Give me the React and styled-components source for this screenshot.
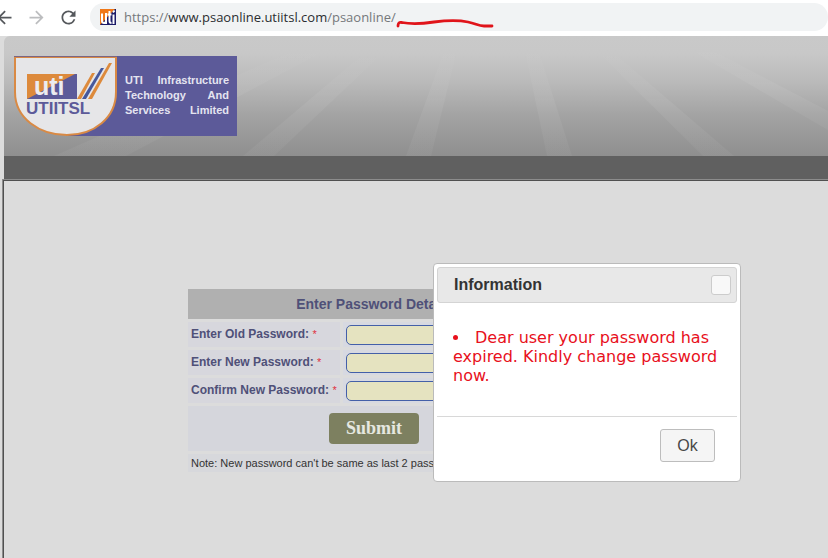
import React, { useState } from 'react';
import styled, { createGlobalStyle } from 'styled-components';
import { MdArrowBack, MdArrowForward, MdRefresh } from 'react-icons/md';

const FIELDS = [
  { name: 'oldPassword', label: 'Enter Old Password:' },
  { name: 'newPassword', label: 'Enter New Password:' },
  { name: 'confirmPassword', label: 'Confirm New Password:' },
];

const Favicon = () => (
  <FaviconSvg viewBox="0 0 16 16" aria-hidden="true">
    <path d="M0 0h16v16H0z" fill="#1c1c68" />
    <path d="M0 0h15L0 16z" fill="#f07818" />
    <g fill="none" stroke="#fff" strokeWidth="2">
      <path d="M2 4.500v7q0 2.500 2 2.500t2-2.500v-7M6 4v11" />
      <path d="M9.500 2v10q0 2 2 2M7.500 5.500h4M13.500 5.500V15M13 3.500l1.500-2" />
    </g>
  </FaviconSvg>
);

const Scribble = () => (
  <ScribbleSvg viewBox="0 0 98 12" aria-hidden="true">
    <path
      d="M2 9C2 6 3 5 6 5.500C16 7.500 28 6.500 38 5C50 3.500 62 3 72 5C80 6.500 82 9 88 9L96 9"
      fill="none"
      stroke="#e0141a"
      strokeWidth="2.800"
      strokeLinecap="round"
    />
  </ScribbleSvg>
);

const Shield = () => (
  <ShieldSvg viewBox="0 0 104 80" role="img" aria-label="UTIITSL">
    <path
      d="M1 1H102V36C102 62 80 79 53 79C25 79 1 62 1 36Z"
      fill="#e6e6e8"
      stroke="#d98a45"
      strokeWidth="2"
    />
    <path d="M0 0H104" stroke="#5c5a99" strokeWidth="1.500" />
    <path d="M13 18H63V43H13Z" fill="#5c5a99" />
    <path d="M13 18H61L13 43Z" fill="#dd8a3c" />
    <path d="M63 43L78 17H81L67 43Z" fill="#dd8a3c" />
    <path d="M68 43L87 12H90L72 43Z" fill="#46589c" />
    <path d="M74 43L95 7H98L78 43Z" fill="#dd8a3c" />
    <UtiText x="20" y="39">
      uti
    </UtiText>
    <UtiitslText x="12" y="58">
      UTIITSL
    </UtiitslText>
  </ShieldSvg>
);

const Rays = () => (
  <RaysSvg viewBox="0 0 824 120" preserveAspectRatio="xMinYMin slice" aria-hidden="true">
    <defs>
      <linearGradient id="ray" x1="0" y1="0" x2="0" y2="1">
        <stop offset="0" stopColor="#fff" stopOpacity="0" />
        <stop offset="0.500" stopColor="#fff" stopOpacity="0.060" />
        <stop offset="1" stopColor="#fff" stopOpacity="0.040" />
      </linearGradient>
    </defs>
    <g fill="url(#ray)">
      <path d="M50 120L300 10H330L122 120Z" />
      <path d="M239 120L364 14H382L270 120Z" />
      <path d="M402 120L442 10H454L427 120Z" />
      <path d="M543 120L520 10H533L568 120Z" />
      <path d="M699 120L590 12H604L730 120Z" />
      <path d="M824 94L680 10H700L824 75Z" />
    </g>
  </RaysSvg>
);

const App = () => {
  const [isDialogOpen, setIsDialogOpen] = useState(true);
  const [values, setValues] = useState({});

  const handleChange = e => {
    const { name, value } = e.target;
    setValues(prev => ({ ...prev, [name]: value }));
  };

  const closeDialog = () => setIsDialogOpen(false);

  return (
    <Page>
      <GlobalStyle />
      <BrowserBar>
        <NavButton type="button" aria-label="Back">
          <MdArrowBack />
        </NavButton>
        <NavButton type="button" aria-label="Forward" $dimmed>
          <MdArrowForward />
        </NavButton>
        <NavButton type="button" aria-label="Reload">
          <MdRefresh />
        </NavButton>
        <AddressBox>
          <Favicon />
          <Url>
            https://<Host>www.psaonline.utiitsl.com</Host>/psaonline/
            <Scribble />
          </Url>
        </AddressBox>
      </BrowserBar>

      <Header>
        <Rays />
        <Logo>
          <Shield />
          <LogoText>UTI Infrastructure Technology And Services Limited</LogoText>
        </Logo>
      </Header>
      <MenuBar />

      <Content>
        <form onSubmit={e => e.preventDefault()}>
          <FormTable>
            <thead>
              <tr>
                <TitleCell colSpan="2">Enter Password Details</TitleCell>
              </tr>
            </thead>
            <tbody>
              {FIELDS.map(({ name, label }) => (
                <tr key={name}>
                  <LabelCell>
                    <label htmlFor={name}>
                      {label} <Required>*</Required>
                    </label>
                  </LabelCell>
                  <FieldCell>
                    <PasswordInput
                      type="password"
                      id={name}
                      name={name}
                      value={values[name] || ''}
                      onChange={handleChange}
                    />
                  </FieldCell>
                </tr>
              ))}
              <tr>
                <SubmitCell colSpan="2">
                  <SubmitButton type="submit">Submit</SubmitButton>
                </SubmitCell>
              </tr>
              <tr>
                <NoteCell colSpan="2">
                  Note: New password can't be same as last 2 passwords
                </NoteCell>
              </tr>
            </tbody>
          </FormTable>
        </form>
      </Content>

      {isDialogOpen && (
        <Dialog role="dialog" aria-labelledby="dialogTitle">
          <DialogHeader>
            <DialogTitle id="dialogTitle">Information</DialogTitle>
            <CloseButton type="button" aria-label="Close" onClick={closeDialog} />
          </DialogHeader>
          <MessageList>
            <li>Dear user your password has expired. Kindly change password now.</li>
          </MessageList>
          <DialogFooter>
            <OkButton type="button" onClick={closeDialog}>
              Ok
            </OkButton>
          </DialogFooter>
        </Dialog>
      )}
    </Page>
  );
};

export default App;

const GlobalStyle = createGlobalStyle`
  * {
    box-sizing: border-box;
  }
  body {
    margin: 0;
    background: #dcdcdc;
    font-family: 'Liberation Sans', Arial, sans-serif;
  }
`;

const Page = styled.div`
  position: relative;
  display: flex;
  flex-direction: column;
  min-height: 100vh;
  overflow: hidden;
`;

const BrowserBar = styled.div`
  display: flex;
  align-items: center;
  height: 36px;
  margin-left: -12px;
  padding-bottom: 2px;
  background: #fff;
`;

const NavButton = styled.button`
  display: flex;
  align-items: center;
  justify-content: center;
  width: 32px;
  height: 32px;
  padding: 0;
  border: 0;
  background: none;
  color: ${({ $dimmed }) => ($dimmed ? '#bcbdbf' : '#55585c')};
  font-size: 21px;
`;

const AddressBox = styled.div`
  display: flex;
  flex: 1;
  align-items: center;
  gap: 8px;
  height: 28px;
  margin-left: 6px;
  padding-left: 10px;
  border-radius: 14px;
  background: #f1f3f4;
`;

const FaviconSvg = styled.svg`
  width: 16px;
  height: 16px;
`;

const Url = styled.div`
  position: relative;
  color: #75787b;
  font-family: 'Open Sans', 'Noto Sans', sans-serif;
  font-size: 13px;
  line-height: 20px;
`;

const Host = styled.span`
  color: #2b2d30;
`;

const ScribbleSvg = styled.svg`
  position: absolute;
  top: 10px;
  left: 100%;
  width: 98px;
  height: 12px;
`;

const Header = styled.header`
  position: relative;
  height: 120px;
  margin-left: 4px;
  padding: 20px 10px 0;
  border-top-left-radius: 6px;
  background: linear-gradient(#c9c9c9, #c8c8c8 14%, #bababa 38%, #a3a3a3 66%, #8f8f8f);
`;

const RaysSvg = styled.svg`
  position: absolute;
  inset: 0;
  width: 100%;
  height: 100%;
`;

const Logo = styled.div`
  position: relative;
  display: flex;
  align-items: center;
  width: 223px;
  height: 80px;
  padding: 0 8px 2px 0;
  background: linear-gradient(90deg, transparent 52px, #5c5a99 52px);
`;

const ShieldSvg = styled.svg`
  flex: none;
  align-self: flex-start;
  width: 104px;
  height: 80px;
`;

const UtiText = styled.text`
  fill: #ececf0;
  font: bold 25px 'Liberation Sans', Arial, sans-serif;
`;

const UtiitslText = styled.text`
  fill: #5c5a99;
  font: bold 17px 'Liberation Sans', Arial, sans-serif;
`;

const LogoText = styled.div`
  flex: 1;
  margin-left: 7px;
  color: #e4e4f0;
  font-size: 11px;
  font-weight: bold;
  line-height: 15px;
  text-align: justify;
  text-align-last: justify;
`;

const MenuBar = styled.nav`
  height: 23px;
  margin-left: 4px;
  background: #606060;
`;

const Content = styled.main`
  flex: 1;
  margin-left: 2px;
  padding: 106px 0 0 182px;
  border: solid #8c8c8c;
  border-width: 1px 0 0 1px;
  box-shadow: inset 1px 1px 0 #505050;
`;

const FormTable = styled.table`
  width: 378px;
  border-spacing: 3px;
  color: #4f5078;
  font-size: 12px;

  td,
  th {
    padding: 0 3px;
  }
`;

const TitleCell = styled.th`
  height: 30px;
  background: #b0b0b0;
  font-size: 14px;
`;

const LabelCell = styled.td`
  width: 152px;
  height: 25px;
  background: #d7d7dd;
  font-weight: bold;
  line-height: 12px;
  white-space: nowrap;

  label {
    display: block;
    padding-bottom: 2px;
  }
`;

const Required = styled.span`
  color: #e03040;
  font-size: 11px;
  font-weight: normal;
`;

const FieldCell = styled.td`
  background: #d7d9e1;
`;

const PasswordInput = styled.input`
  display: block;
  width: 160px;
  height: 20px;
  padding: 0 4px;
  border: 1px solid #4460a8;
  border-radius: 5px;
  background: #e5e3c0;
`;

const SubmitCell = styled.td`
  height: 45px;
  background: #d5d6dc;
  text-align: center;
`;

const SubmitButton = styled.button`
  width: 90px;
  height: 31px;
  padding: 0;
  border: 0;
  border-radius: 4px;
  background: #7d8060;
  color: #e6e8e0;
  font: bold 18px 'Liberation Serif', 'Times New Roman', serif;
`;

const NoteCell = styled.td`
  height: 18px;
  background: #d7d8dc;
  color: #333;
  font-size: 11px;
`;

const Dialog = styled.section`
  position: absolute;
  top: 263px;
  left: 433px;
  width: 308px;
  padding: 3px;
  border: 1px solid #bbb;
  border-radius: 4px;
  background: #fff;
`;

const DialogHeader = styled.div`
  display: flex;
  align-items: center;
  justify-content: space-between;
  height: 36px;
  padding: 0 5px 0 16px;
  border: 1px solid #d4d4d4;
  border-radius: 3px;
  background: #e8e8e8;
`;

const DialogTitle = styled.h2`
  margin: 0;
  color: #333;
  font-size: 16px;
`;

const CloseButton = styled.button`
  width: 20px;
  height: 20px;
  padding: 0;
  border: 1px solid #ccc;
  border-radius: 3px;
  background: #f8f8f8;
`;

const MessageList = styled.ul`
  margin: 0;
  padding: 25px 16px 31px;
  color: #e8101c;
  font-family: Verdana, 'DejaVu Sans', sans-serif;
  font-size: 16px;
  line-height: 19px;
  list-style-position: inside;
`;

const DialogFooter = styled.div`
  display: flex;
  justify-content: flex-end;
  padding: 12px 22px 16px;
  border-top: 1px solid #d8d8d8;
`;

const OkButton = styled.button`
  width: 55px;
  height: 33px;
  padding: 0;
  border: 1px solid #bdbdbd;
  border-radius: 3px;
  background: #f5f5f5;
  color: #484848;
  font: 16px 'Liberation Sans', Arial, sans-serif;
`;
